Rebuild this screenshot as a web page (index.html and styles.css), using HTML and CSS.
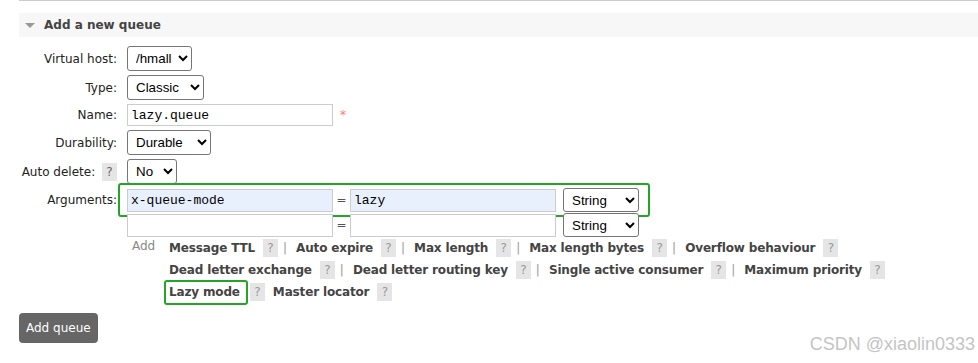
FILE: index.html
```html
<!DOCTYPE html>
<html lang="en">

<head>
  <meta charset="UTF-8" />
  <title>Add a new queue</title>
  <link rel="stylesheet" href="styles.css">
</head>

<body>
  <div class="page">
    <div class="topline"></div>
    <div class="section">
      <h2 class="section-head"><span class="tri"></span>Add a new queue</h2>

      <div class="form">
        <label>Virtual host:</label>
        <div class="field">
          <select class="sel-vhost">
            <option>/hmall</option>
          </select>
        </div>

        <label>Type:</label>
        <div class="field">
          <select class="sel-type">
            <option>Classic</option>
          </select>
        </div>

        <label>Name:</label>
        <div class="field">
          <input type="text" class="txt" value="lazy.queue" />
          <span class="mand">*</span>
        </div>

        <label>Durability:</label>
        <div class="field">
          <select class="sel-dur">
            <option>Durable</option>
          </select>
        </div>

        <label>Auto delete: <span class="help">?</span></label>
        <div class="field">
          <select class="sel-auto">
            <option>No</option>
          </select>
        </div>

        <label class="args-label">Arguments:</label>
        <div class="args">
          <div class="arg-row marked">
            <input type="text" class="txt filled" value="x-queue-mode" />
            <span class="eq">=</span>
            <input type="text" class="txt filled" value="lazy" />
            <select class="sel-str">
              <option>String</option>
            </select>
          </div>
          <div class="arg-row">
            <input type="text" class="txt" />
            <span class="eq">=</span>
            <input type="text" class="txt" />
            <select class="sel-str">
              <option>String</option>
            </select>
          </div>
        </div>
      </div>

      <div class="add-row">
        <span class="add-label">Add</span>
        <div class="links">
          <div class="line">
            <span class="arg">Message TTL</span><span class="help">?</span><span class="sep">|</span>
            <span class="arg">Auto expire</span><span class="help">?</span><span class="sep">|</span>
            <span class="arg">Max length</span><span class="help">?</span><span class="sep">|</span>
            <span class="arg">Max length bytes</span><span class="help">?</span><span class="sep">|</span>
            <span class="arg">Overflow behaviour</span><span class="help">?</span>
          </div>
          <div class="line">
            <span class="arg">Dead letter exchange</span><span class="help">?</span><span class="sep">|</span>
            <span class="arg">Dead letter routing key</span><span class="help">?</span><span class="sep">|</span>
            <span class="arg">Single active consumer</span><span class="help">?</span><span class="sep">|</span>
            <span class="arg">Maximum priority</span><span class="help">?</span>
          </div>
          <div class="line">
            <span class="arg lazy">Lazy mode</span><span class="help tight">?</span>
            <span class="arg">Master locator</span><span class="help">?</span>
          </div>
        </div>
      </div>

      <button class="btn">Add queue</button>
    </div>

    <div class="watermark">CSDN @xiaolin0333</div>
  </div>
</body>

</html>
```

FILE: styles.css
```css
body {
  margin: 0;
  font-family: "DejaVu Sans", Verdana, sans-serif;
  font-size: 12px;
  color: #333;
  background: #fff;
}

.page {
  position: relative;
  width: 978px;
  height: 363px;
  overflow: hidden;
}

.topline {
  margin-left: 19px;
  border-top: 1px solid #ccc;
}

.section {
  padding-left: 19px;
}

.section-head {
  margin: 12px 0 0 0;
  height: 24px;
  line-height: 24px;
  background: #f7f7f7;
  font-size: 12px;
  font-weight: bold;
  color: #444;
  display: flex;
  align-items: center;
}

.tri {
  display: inline-block;
  width: 0;
  height: 0;
  margin: 1px 9px 0 6px;
  border-left: 5px solid transparent;
  border-right: 5px solid transparent;
  border-top: 5px solid #999;
}

/* form grid */
.form {
  margin-top: 9px;
  display: grid;
  grid-template-columns: 98px auto;
  column-gap: 10px;
  row-gap: 4px;
  align-items: center;
}

.form label {
  text-align: right;
  white-space: nowrap;
  color: #222;
}

.args-label {
  align-self: start;
  padding-top: 5px;
}

.field {
  display: flex;
  align-items: center;
}

select {
  box-sizing: border-box;
  height: 25px;
  font-family: "Liberation Sans", Arial, sans-serif;
  font-size: 13.33px;
  color: #000;
  background: #fff;
  border: 1px solid #767676;
  border-radius: 3px;
  padding: 0 2px 0 4px;
}

.sel-vhost { width: 65px; }
.sel-type { width: 77px; }
.sel-dur { width: 84px; }
.sel-auto { width: 50px; }
.sel-str { width: 76px; height: 24px; margin-left: 7px; }

.txt {
  box-sizing: border-box;
  width: 206px;
  height: 22px;
  font-family: "Liberation Mono", "Courier New", monospace;
  font-size: 13px;
  color: #000;
  border: 1px solid #ccc;
  padding: 1px 3px;
  margin: 0;
  outline: none;
}

.txt.filled {
  background: #e8f0fe;
}

.mand {
  margin-left: 7px;
  color: #f77;
  font-size: 12px;
  line-height: 1;
}

.help {
  display: inline-block;
  width: 15px;
  height: 18px;
  line-height: 18px;
  text-align: center;
  background: #e5e5e5;
  color: #999;
  font-weight: normal;
  vertical-align: middle;
}

.form label .help {
  margin-left: 3px;
  color: #666;
}

/* arguments */
.args {
  display: flex;
  flex-direction: column;
  gap: 1px;
}

.arg-row {
  position: relative;
  display: flex;
  align-items: center;
  width: 512px;
}

.arg-row .txt {
  height: 23px;
}

.eq {
  width: 17px;
  text-align: center;
  color: #555;
}

.marked::after {
  content: "";
  position: absolute;
  left: -9px;
  right: -11px;
  top: -5px;
  bottom: -5px;
  border: 2px solid #23a526;
  border-radius: 3px;
}

/* add argument links */
.add-row {
  display: flex;
  margin-top: 0;
  padding-left: 113px;
}

.add-label {
  width: 37px;
  color: #888;
  line-height: 19px;
}

.line {
  height: 22px;
  display: flex;
  align-items: center;
  white-space: nowrap;
}

.arg {
  position: relative;
  font-weight: bold;
  color: #444;
  letter-spacing: -0.15px;
}

.arg + .help {
  margin-left: 8px;
}

.help.tight {
  margin-left: 10px;
  margin-right: 8px;
}

.sep {
  color: #999;
  margin: 0 9px 0 5px;
}

.lazy::after {
  content: "";
  position: absolute;
  left: -5px;
  right: -8px;
  top: -5px;
  bottom: -6px;
  border: 2px solid #23a526;
  border-radius: 3px;
}

.btn {
  margin-top: 10px;
  height: 30px;
  padding: 0 7px;
  border: none;
  border-radius: 4px;
  background: #666;
  color: #fff;
  font-family: "DejaVu Sans", Verdana, sans-serif;
  font-size: 12px;
}

.watermark {
  position: absolute;
  right: 3px;
  bottom: 8px;
  font-family: "Liberation Sans", Arial, sans-serif;
  font-size: 18px;
  color: #c4c4c4;
}
```
